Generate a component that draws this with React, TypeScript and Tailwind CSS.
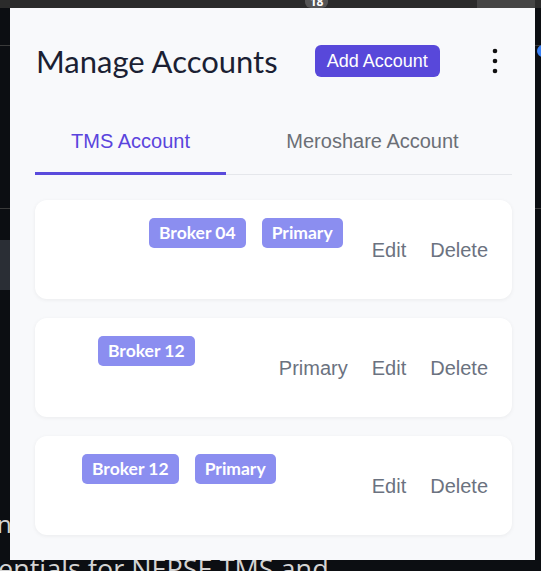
import { useState } from 'react';

type Account = {
  id: number;
  broker: string;
  primary: boolean;
  logoWidth: number;
};

const accounts: Account[] = [
  { id: 1, broker: 'Broker 04', primary: true, logoWidth: 78 },
  { id: 2, broker: 'Broker 12', primary: false, logoWidth: 27 },
  { id: 3, broker: 'Broker 12', primary: true, logoWidth: 11 },
];

function KebabIcon() {
  return (
    <svg viewBox="0 0 24 30" className="w-6 h-[30px]" fill="#111">
      <circle cx="12" cy="5" r="2.3" />
      <circle cx="12" cy="15" r="2.3" />
      <circle cx="12" cy="25" r="2.3" />
    </svg>
  );
}

function AccountCard({ account }: { account: Account }) {
  return (
    <div className="bg-white rounded-xl shadow-[0_1px_4px_rgba(0,0,0,0.06)] h-[99px] pl-5 pr-6 py-[18px] flex items-center justify-between">
      <div className="flex items-start gap-4 self-stretch">
        {/* broker logo, mostly white */}
        <div className="h-full bg-white" style={{ width: account.logoWidth }} />
        <div className="flex gap-4">
          <span className="bg-[#8b8ef0] text-white font-bold text-[17.5px] leading-[30px] h-[30px] px-[10px] rounded-[5px] font-['Lato',sans-serif]">
            {account.broker}
          </span>
          {account.primary && (
            <span className="bg-[#8b8ef0] text-white font-bold text-[17.5px] leading-[30px] h-[30px] px-[10px] rounded-[5px] font-['Lato',sans-serif]">
              Primary
            </span>
          )}
        </div>
      </div>
      <div className="flex items-center gap-6 text-[20px] text-[#6b7280] font-['Liberation_Sans',Arial,sans-serif]">
        {!account.primary && <button>Primary</button>}
        <button>Edit</button>
        <button>Delete</button>
      </div>
    </div>
  );
}

export default function App() {
  const [tab, setTab] = useState<'tms' | 'mero'>('tms');

  return (
    <div className="relative w-[541px] h-[571px] overflow-hidden bg-[#0c0e12]">
      {/* page behind the dialog */}
      <div className="h-2 bg-[#2b2b2b] relative">
        <div className="absolute left-[305px] -top-3 w-[23px] h-5 rounded-md bg-[#555] text-white text-xs font-bold text-center leading-[28px]">18</div>
        <div className="absolute left-[477px] top-0 w-[58px] h-2 bg-[#454545]" />
      </div>
      <div className="absolute left-0 right-0 top-[45px] h-px bg-[#3a3a3a]" />
      <div className="absolute left-0 right-0 top-[208px] h-px bg-[#3a3a3a]" />
      <div className="absolute left-0 top-[240px] w-8 h-[50px] bg-[#2a2e35]" />
      <div className="absolute left-[537px] top-[45px] w-3 h-3 rounded-full bg-[#3b82f6]" />
      <div className="absolute -left-[3px] top-[506px] text-[24px] text-[#d4d4d4] font-['Open_Sans',sans-serif]">ns</div>
      <div className="absolute -left-[2px] top-[549px] text-[27px] text-[#d4d4d4] font-['Open_Sans',sans-serif] whitespace-nowrap">entials for NEPSE TMS and</div>

      {/* dialog */}
      <div className="absolute left-[10px] top-2 w-[525px] h-[552px] bg-[#f8f9fb] pl-[25px] pr-[23px] pt-[33px] pb-6">
        <div className="flex items-center h-10">
          <h1 className="pl-px text-[31px] text-[#1b1f33] font-['Lato',sans-serif] leading-10">Manage Accounts</h1>
          <button className="ml-[37px] h-8 px-3 rounded-md bg-[#5848da] text-white text-[18px] font-['Liberation_Sans',Arial,sans-serif]">
            Add Account
          </button>
          <button className="ml-auto mr-[5px]">
            <KebabIcon />
          </button>
        </div>

        <div className="mt-[46px] flex border-b border-[#e5e7eb] font-['Liberation_Sans',Arial,sans-serif] text-[20px]">
          <button
            onClick={() => setTab('tms')}
            className={`w-[191px] h-12 pb-[17px] leading-7 -mb-px border-b-[3px] ${tab === 'tms' ? 'border-[#5a4bdc] text-[#5a44dd]' : 'border-transparent text-[#6b6f76]'}`}
          >
            TMS Account
          </button>
          <button
            onClick={() => setTab('mero')}
            className={`flex-1 h-12 pl-[7px] pb-[17px] leading-7 -mb-px border-b-[3px] ${tab === 'mero' ? 'border-[#5a4bdc] text-[#5a44dd]' : 'border-transparent text-[#6b6f76]'}`}
          >
            Meroshare Account
          </button>
        </div>

        <div className="mt-[25px] flex flex-col gap-[19px]">
          {accounts.map((a) => (
            <AccountCard key={a.id} account={a} />
          ))}
        </div>
      </div>
    </div>
  );
}
